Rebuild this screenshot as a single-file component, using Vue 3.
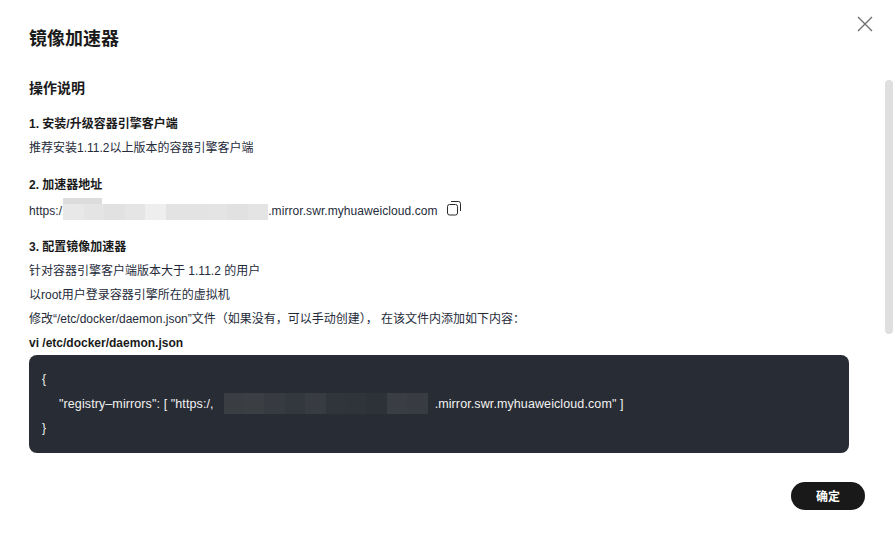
<template>
  <div class="dialog">
    <!-- Cabecera -->
    <header class="dialog-header">
      <h1>镜像加速器</h1>
      <button class="close-button" aria-label="关闭">
        <svg width="16" height="16" viewBox="0 0 16 16">
          <path d="M1 1L15 15M15 1L1 15" stroke="#6e6e6e" stroke-width="1.4" fill="none" />
        </svg>
      </button>
    </header>

    <main class="dialog-body">
      <h2>操作说明</h2>

      <section class="step">
        <h3>1. 安装/升级容器引擎客户端</h3>
        <p>推荐安装1.11.2以上版本的容器引擎客户端</p>
      </section>

      <section class="step step-address">
        <h3>2. 加速器地址</h3>
        <div class="address">
          <span>https:/</span>
          <span class="mosaic light">
            <span class="mosaic-top"></span>
            <i v-for="(c, i) in lightTiles" :key="i" :style="{ background: c }"></i>
          </span>
          <span>.mirror.swr.myhuaweicloud.com</span>
          <svg class="copy-icon" width="15" height="16" viewBox="0 0 15 16" fill="none" stroke="#2a2a2a" stroke-width="1">
            <rect x="1.5" y="4.5" width="10" height="10.5" rx="2" />
            <path d="M5 1.5h7.5a2 2 0 0 1 2 2V11" />
          </svg>
        </div>
      </section>

      <section class="step step-config">
        <h3>3. 配置镜像加速器</h3>
        <p>针对容器引擎客户端版本大于 1.11.2 的用户</p>
        <p>以root用户登录容器引擎所在的虚拟机</p>
        <p>修改“/etc/docker/daemon.json”文件（如果没有，可以手动创建）， 在该文件内添加如下内容：</p>
        <p class="command">vi /etc/docker/daemon.json</p>
      </section>

      <div class="code-block">
        <div>{</div>
        <div class="code-line">
          <span class="code-text">"registry–mirrors": [  "https:/,</span>
          <span class="mosaic dark">
            <i v-for="(c, i) in darkTiles" :key="i" :style="{ background: c }"></i>
          </span>
          <span class="code-text">.mirror.swr.myhuaweicloud.com" ]</span>
        </div>
        <div>}</div>
      </div>
    </main>

    <footer class="dialog-footer">
      <button class="ok-button">确定</button>
    </footer>

    <!-- Barra de desplazamiento superpuesta -->
    <div class="scroll-thumb"></div>
  </div>
</template>

<script setup>
const lightTiles = [
  '#e8e8e8', '#e4e4e4', '#e1e1e1', '#e5e5e5', '#eeeeee', '#e3e3e3', '#e3e3e3', '#e4e4e4', '#e1e1e1', '#e4e4e4'
]
const darkTiles = [
  '#3a3d42', '#3b3e42', '#373a40', '#33373e', '#383b42', '#30343b', '#2f333a', '#2d3138', '#3a3d44', '#383b42'
]
</script>

<style>
html,
body {
  margin: 0;
  background: #fff;
}
</style>

<style scoped>
.dialog {
  position: relative;
  width: 895px;
  height: 535px;
  overflow: hidden;
  background: #fff;
  color: #252b3a;
  font-family: "Liberation Sans", "Noto Sans CJK SC", sans-serif;
  font-size: 12px;
  line-height: 24px;
  display: flex;
  flex-direction: column;
}

.dialog-header {
  display: flex;
  justify-content: space-between;
  padding: 27px 22px 0 29px;
}

h1 {
  margin: 0;
  font-size: 18px;
  line-height: 24px;
  font-weight: 700;
  color: #1a1a1a;
}

.close-button {
  border: none;
  background: none;
  padding: 0;
  margin-top: -11px;
  width: 16px;
  height: 16px;
  cursor: pointer;
}

.dialog-body {
  flex: 1;
  padding: 25px 46px 0 29px;
}

h2 {
  margin: 0 0 12px;
  font-size: 14px;
  line-height: 24px;
  font-weight: 700;
  color: #1a1a1a;
}

h3 {
  margin: 0;
  font-size: 12px;
  line-height: 24px;
  font-weight: 700;
  color: #1a1a1a;
}

p {
  margin: 0;
}

.step {
  margin-bottom: 13px;
}

.step-address {
  margin-bottom: 10px;
}

.step-config {
  margin-bottom: 0;
}

.command {
  font-weight: 700;
  color: #1a1a1a;
}

.address {
  display: flex;
  align-items: center;
  height: 28px;
  letter-spacing: 0.07px;
}

.mosaic {
  position: relative;
  display: flex;
  flex-shrink: 0;
}

.mosaic i {
  flex: 1;
}

.light {
  width: 205px;
  height: 16px;
  margin: 2px 0 0 1px;
}

.mosaic-top {
  position: absolute;
  left: 0;
  top: -6px;
  width: 39px;
  height: 6px;
  background: #dcdcdc;
}

.copy-icon {
  margin: -6px 0 0 8px;
}

.code-block {
  width: 820px;
  box-sizing: border-box;
  height: 98px;
  padding: 12px 13px;
  border-radius: 8px;
  background: #282c34;
  color: #f2f2f2;
}

.code-line {
  display: flex;
  align-items: center;
  padding-left: 17px;
}

.code-text {
  margin-top: 1px;
  font-size: 12.5px;
  letter-spacing: 0.1px;
  white-space: pre;
}

.dark {
  width: 204px;
  height: 21px;
  margin: 0 7px 0 10px;
}

.dialog-footer {
  display: flex;
  justify-content: flex-end;
  padding: 0 30px 25px 0;
}

.ok-button {
  width: 74px;
  height: 28px;
  padding: 0 0 2px;
  border: none;
  border-radius: 14px;
  background: #191919;
  color: #fff;
  font-family: inherit;
  font-size: 12px;
  font-weight: 700;
  cursor: pointer;
}

.scroll-thumb {
  position: absolute;
  right: 2px;
  top: 80px;
  width: 8px;
  height: 254px;
  border-radius: 4px;
  background: #dfdfdf;
}
</style>
